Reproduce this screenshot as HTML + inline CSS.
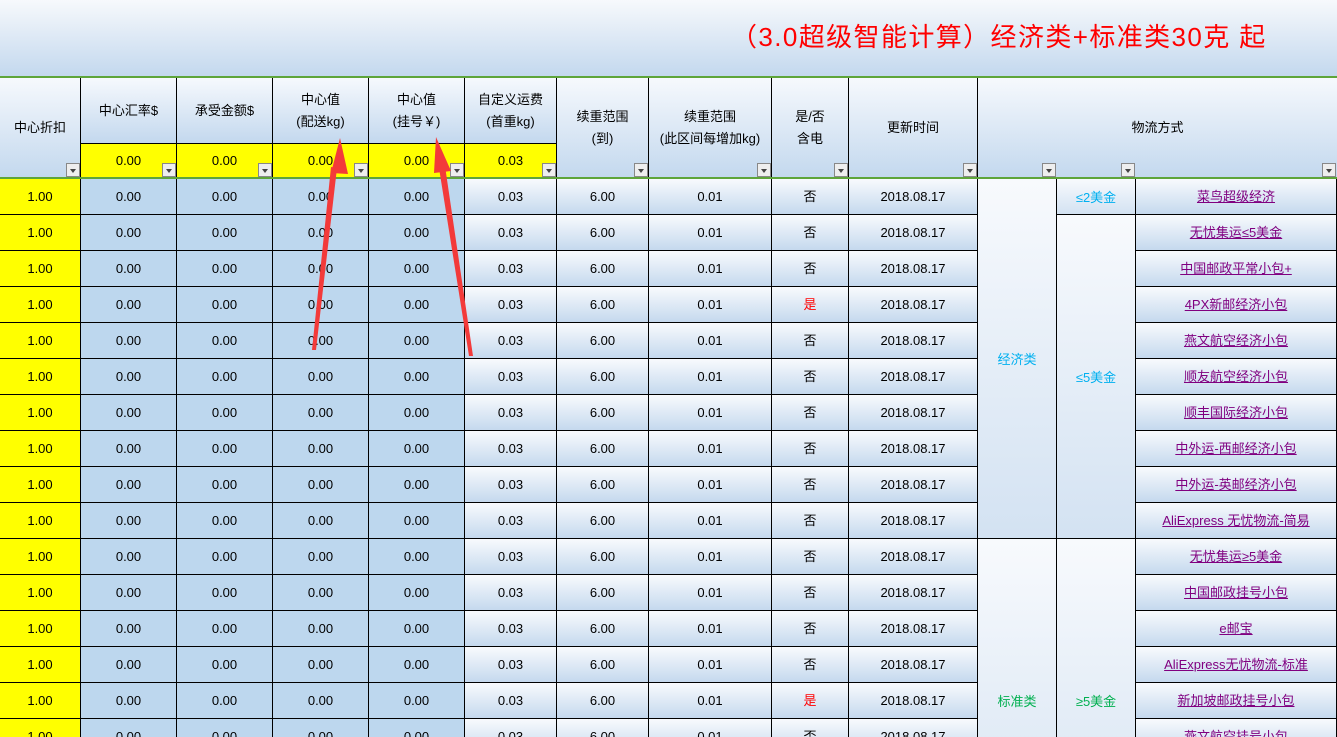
<!DOCTYPE html>
<html style="height:737px;overflow:hidden"><head><meta charset="utf-8"><style>
*{box-sizing:border-box;margin:0;padding:0}
body{width:1337px;height:737px;overflow:hidden;position:relative;background:#fff;font-family:"Liberation Sans","Noto Sans CJK SC",sans-serif;font-size:13px;color:#000}
.top{position:absolute;left:0;top:0;width:1337px;height:76px;background:linear-gradient(#f7f9fc,#c3d8ee)}
.title{position:absolute;left:731px;top:17px;font-size:26px;color:#f00;white-space:nowrap;letter-spacing:1.4px}
.gl{position:absolute;left:0;width:1337px;height:2px;background:#5ea53a}
.hd{position:absolute;top:78px;height:100px;border-right:1px solid #000;background:linear-gradient(#f6f9fd,#c3d8ee);text-align:center;line-height:22px;display:flex;align-items:center;justify-content:center}
.hy{position:absolute;top:143px;height:35px;background:#ff0;border-right:1px solid #000;border-top:1px solid #000;text-align:center;line-height:34px}
.dd{position:absolute;top:163px;width:14px;height:14px;border:1px solid #888;background:#eee}
.dd:after{content:"";position:absolute;left:3px;top:5px;border-left:3.5px solid transparent;border-right:3.5px solid transparent;border-top:4px solid #444}
.r{position:absolute;left:0;height:36px;display:flex}
.r div{height:36px;border-right:1px solid #000;border-bottom:1px solid #000;text-align:center;line-height:35px;white-space:nowrap;overflow:hidden}
.y{background:#ff0}.b{background:#bdd7ee}.g{background:linear-gradient(#f8fafd,#c5d9ee)}
.e{background:transparent}
a{color:#800080;text-decoration:underline}
.m{position:absolute;border-right:1px solid #000;border-bottom:1px solid #000;background:linear-gradient(#f8fafd,#d3e2f2);display:flex;align-items:center;justify-content:center}
.red{color:#f00}
</style></head><body>
<div class="top"></div>
<div class="title">（3.0超级智能计算）经济类+标准类30克 起</div>
<div class="gl" style="top:76px"></div>

<div class="hd" style="left:0;width:81px">中心折扣</div>
<div class="hd" style="left:81px;width:96px;height:65px">中心汇率$</div>
<div class="hd" style="left:177px;width:96px;height:65px">承受金额$</div>
<div class="hd" style="left:273px;width:96px;height:65px">中心值<br>(配送kg)</div>
<div class="hd" style="left:369px;width:96px;height:65px">中心值<br>(挂号￥)</div>
<div class="hd" style="left:465px;width:92px;height:65px">自定义运费<br>(首重kg)</div>
<div class="hy" style="left:81px;width:96px">0.00</div>
<div class="hy" style="left:177px;width:96px">0.00</div>
<div class="hy" style="left:273px;width:96px">0.00</div>
<div class="hy" style="left:369px;width:96px">0.00</div>
<div class="hy" style="left:465px;width:92px">0.03</div>
<div class="hd" style="left:557px;width:92px">续重范围<br>(到)</div>
<div class="hd" style="left:649px;width:123px">续重范围<br>(此区间每增加kg)</div>
<div class="hd" style="left:772px;width:77px">是/否<br>含电</div>
<div class="hd" style="left:849px;width:129px">更新时间</div>
<div class="hd" style="left:978px;width:359px;border-right:none">物流方式</div>

<div class="dd" style="left:66px"></div><div class="dd" style="left:162px"></div><div class="dd" style="left:258px"></div><div class="dd" style="left:354px"></div><div class="dd" style="left:450px"></div><div class="dd" style="left:542px"></div><div class="dd" style="left:634px"></div><div class="dd" style="left:757px"></div><div class="dd" style="left:834px"></div><div class="dd" style="left:963px"></div><div class="dd" style="left:1042px"></div><div class="dd" style="left:1121px"></div><div class="dd" style="left:1322px"></div>

<div class="gl" style="top:177px"></div>

<div class="r" style="top:179px"><div class="y" style="width:81px">1.00</div><div class="b" style="width:96px">0.00</div><div class="b" style="width:96px">0.00</div><div class="b" style="width:96px">0.00</div><div class="b" style="width:96px">0.00</div><div class="g" style="width:92px">0.03</div><div class="g" style="width:92px">6.00</div><div class="g" style="width:123px">0.01</div><div class="g" style="width:77px">否</div><div class="g" style="width:129px">2018.08.17</div><div class="e" style="width:158px;border:none"></div><div class="g" style="width:201px"><a>菜鸟超级经济</a></div></div>
<div class="r" style="top:215px"><div class="y" style="width:81px">1.00</div><div class="b" style="width:96px">0.00</div><div class="b" style="width:96px">0.00</div><div class="b" style="width:96px">0.00</div><div class="b" style="width:96px">0.00</div><div class="g" style="width:92px">0.03</div><div class="g" style="width:92px">6.00</div><div class="g" style="width:123px">0.01</div><div class="g" style="width:77px">否</div><div class="g" style="width:129px">2018.08.17</div><div class="e" style="width:158px;border:none"></div><div class="g" style="width:201px"><a>无忧集运≤5美金</a></div></div>
<div class="r" style="top:251px"><div class="y" style="width:81px">1.00</div><div class="b" style="width:96px">0.00</div><div class="b" style="width:96px">0.00</div><div class="b" style="width:96px">0.00</div><div class="b" style="width:96px">0.00</div><div class="g" style="width:92px">0.03</div><div class="g" style="width:92px">6.00</div><div class="g" style="width:123px">0.01</div><div class="g" style="width:77px">否</div><div class="g" style="width:129px">2018.08.17</div><div class="e" style="width:158px;border:none"></div><div class="g" style="width:201px"><a>中国邮政平常小包+</a></div></div>
<div class="r" style="top:287px"><div class="y" style="width:81px">1.00</div><div class="b" style="width:96px">0.00</div><div class="b" style="width:96px">0.00</div><div class="b" style="width:96px">0.00</div><div class="b" style="width:96px">0.00</div><div class="g" style="width:92px">0.03</div><div class="g" style="width:92px">6.00</div><div class="g" style="width:123px">0.01</div><div class="g red" style="width:77px">是</div><div class="g" style="width:129px">2018.08.17</div><div class="e" style="width:158px;border:none"></div><div class="g" style="width:201px"><a>4PX新邮经济小包</a></div></div>
<div class="r" style="top:323px"><div class="y" style="width:81px">1.00</div><div class="b" style="width:96px">0.00</div><div class="b" style="width:96px">0.00</div><div class="b" style="width:96px">0.00</div><div class="b" style="width:96px">0.00</div><div class="g" style="width:92px">0.03</div><div class="g" style="width:92px">6.00</div><div class="g" style="width:123px">0.01</div><div class="g" style="width:77px">否</div><div class="g" style="width:129px">2018.08.17</div><div class="e" style="width:158px;border:none"></div><div class="g" style="width:201px"><a>燕文航空经济小包</a></div></div>
<div class="r" style="top:359px"><div class="y" style="width:81px">1.00</div><div class="b" style="width:96px">0.00</div><div class="b" style="width:96px">0.00</div><div class="b" style="width:96px">0.00</div><div class="b" style="width:96px">0.00</div><div class="g" style="width:92px">0.03</div><div class="g" style="width:92px">6.00</div><div class="g" style="width:123px">0.01</div><div class="g" style="width:77px">否</div><div class="g" style="width:129px">2018.08.17</div><div class="e" style="width:158px;border:none"></div><div class="g" style="width:201px"><a>顺友航空经济小包</a></div></div>
<div class="r" style="top:395px"><div class="y" style="width:81px">1.00</div><div class="b" style="width:96px">0.00</div><div class="b" style="width:96px">0.00</div><div class="b" style="width:96px">0.00</div><div class="b" style="width:96px">0.00</div><div class="g" style="width:92px">0.03</div><div class="g" style="width:92px">6.00</div><div class="g" style="width:123px">0.01</div><div class="g" style="width:77px">否</div><div class="g" style="width:129px">2018.08.17</div><div class="e" style="width:158px;border:none"></div><div class="g" style="width:201px"><a>顺丰国际经济小包</a></div></div>
<div class="r" style="top:431px"><div class="y" style="width:81px">1.00</div><div class="b" style="width:96px">0.00</div><div class="b" style="width:96px">0.00</div><div class="b" style="width:96px">0.00</div><div class="b" style="width:96px">0.00</div><div class="g" style="width:92px">0.03</div><div class="g" style="width:92px">6.00</div><div class="g" style="width:123px">0.01</div><div class="g" style="width:77px">否</div><div class="g" style="width:129px">2018.08.17</div><div class="e" style="width:158px;border:none"></div><div class="g" style="width:201px"><a>中外运-西邮经济小包</a></div></div>
<div class="r" style="top:467px"><div class="y" style="width:81px">1.00</div><div class="b" style="width:96px">0.00</div><div class="b" style="width:96px">0.00</div><div class="b" style="width:96px">0.00</div><div class="b" style="width:96px">0.00</div><div class="g" style="width:92px">0.03</div><div class="g" style="width:92px">6.00</div><div class="g" style="width:123px">0.01</div><div class="g" style="width:77px">否</div><div class="g" style="width:129px">2018.08.17</div><div class="e" style="width:158px;border:none"></div><div class="g" style="width:201px"><a>中外运-英邮经济小包</a></div></div>
<div class="r" style="top:503px"><div class="y" style="width:81px">1.00</div><div class="b" style="width:96px">0.00</div><div class="b" style="width:96px">0.00</div><div class="b" style="width:96px">0.00</div><div class="b" style="width:96px">0.00</div><div class="g" style="width:92px">0.03</div><div class="g" style="width:92px">6.00</div><div class="g" style="width:123px">0.01</div><div class="g" style="width:77px">否</div><div class="g" style="width:129px">2018.08.17</div><div class="e" style="width:158px;border:none"></div><div class="g" style="width:201px"><a>AliExpress 无忧物流-简易</a></div></div>
<div class="r" style="top:539px"><div class="y" style="width:81px">1.00</div><div class="b" style="width:96px">0.00</div><div class="b" style="width:96px">0.00</div><div class="b" style="width:96px">0.00</div><div class="b" style="width:96px">0.00</div><div class="g" style="width:92px">0.03</div><div class="g" style="width:92px">6.00</div><div class="g" style="width:123px">0.01</div><div class="g" style="width:77px">否</div><div class="g" style="width:129px">2018.08.17</div><div class="e" style="width:158px;border:none"></div><div class="g" style="width:201px"><a>无忧集运≥5美金</a></div></div>
<div class="r" style="top:575px"><div class="y" style="width:81px">1.00</div><div class="b" style="width:96px">0.00</div><div class="b" style="width:96px">0.00</div><div class="b" style="width:96px">0.00</div><div class="b" style="width:96px">0.00</div><div class="g" style="width:92px">0.03</div><div class="g" style="width:92px">6.00</div><div class="g" style="width:123px">0.01</div><div class="g" style="width:77px">否</div><div class="g" style="width:129px">2018.08.17</div><div class="e" style="width:158px;border:none"></div><div class="g" style="width:201px"><a>中国邮政挂号小包 </a></div></div>
<div class="r" style="top:611px"><div class="y" style="width:81px">1.00</div><div class="b" style="width:96px">0.00</div><div class="b" style="width:96px">0.00</div><div class="b" style="width:96px">0.00</div><div class="b" style="width:96px">0.00</div><div class="g" style="width:92px">0.03</div><div class="g" style="width:92px">6.00</div><div class="g" style="width:123px">0.01</div><div class="g" style="width:77px">否</div><div class="g" style="width:129px">2018.08.17</div><div class="e" style="width:158px;border:none"></div><div class="g" style="width:201px"><a>e邮宝</a></div></div>
<div class="r" style="top:647px"><div class="y" style="width:81px">1.00</div><div class="b" style="width:96px">0.00</div><div class="b" style="width:96px">0.00</div><div class="b" style="width:96px">0.00</div><div class="b" style="width:96px">0.00</div><div class="g" style="width:92px">0.03</div><div class="g" style="width:92px">6.00</div><div class="g" style="width:123px">0.01</div><div class="g" style="width:77px">否</div><div class="g" style="width:129px">2018.08.17</div><div class="e" style="width:158px;border:none"></div><div class="g" style="width:201px"><a>AliExpress无忧物流-标准</a></div></div>
<div class="r" style="top:683px"><div class="y" style="width:81px">1.00</div><div class="b" style="width:96px">0.00</div><div class="b" style="width:96px">0.00</div><div class="b" style="width:96px">0.00</div><div class="b" style="width:96px">0.00</div><div class="g" style="width:92px">0.03</div><div class="g" style="width:92px">6.00</div><div class="g" style="width:123px">0.01</div><div class="g red" style="width:77px">是</div><div class="g" style="width:129px">2018.08.17</div><div class="e" style="width:158px;border:none"></div><div class="g" style="width:201px"><a>新加坡邮政挂号小包</a></div></div>
<div class="r" style="top:719px"><div class="y" style="width:81px">1.00</div><div class="b" style="width:96px">0.00</div><div class="b" style="width:96px">0.00</div><div class="b" style="width:96px">0.00</div><div class="b" style="width:96px">0.00</div><div class="g" style="width:92px">0.03</div><div class="g" style="width:92px">6.00</div><div class="g" style="width:123px">0.01</div><div class="g" style="width:77px">否</div><div class="g" style="width:129px">2018.08.17</div><div class="e" style="width:158px;border:none"></div><div class="g" style="width:201px"><a>燕文航空挂号小包</a></div></div>

<div class="m" style="left:978px;top:179px;width:79px;height:360px;color:#00b0f0">经济类</div>
<div class="m" style="left:1057px;top:179px;width:79px;height:36px;color:#00b0f0">≤2美金</div>
<div class="m" style="left:1057px;top:215px;width:79px;height:324px;color:#00b0f0">≤5美金</div>
<div class="m" style="left:978px;top:539px;width:79px;height:324px;color:#00b050">标准类</div>
<div class="m" style="left:1057px;top:539px;width:79px;height:324px;color:#00b050">≥5美金</div>

<svg style="position:absolute;left:0;top:0" width="1337" height="737">
<polygon points="312,350 316,350 337,168 331,167" fill="#f33a3a"/>
<polygon points="340,138 331,173 348,174" fill="#f33a3a"/>
<polygon points="469,356 473,356 445,166 439,168" fill="#f33a3a"/>
<polygon points="436,137 434,173 451,171" fill="#f33a3a"/>
</svg>
</body></html>
